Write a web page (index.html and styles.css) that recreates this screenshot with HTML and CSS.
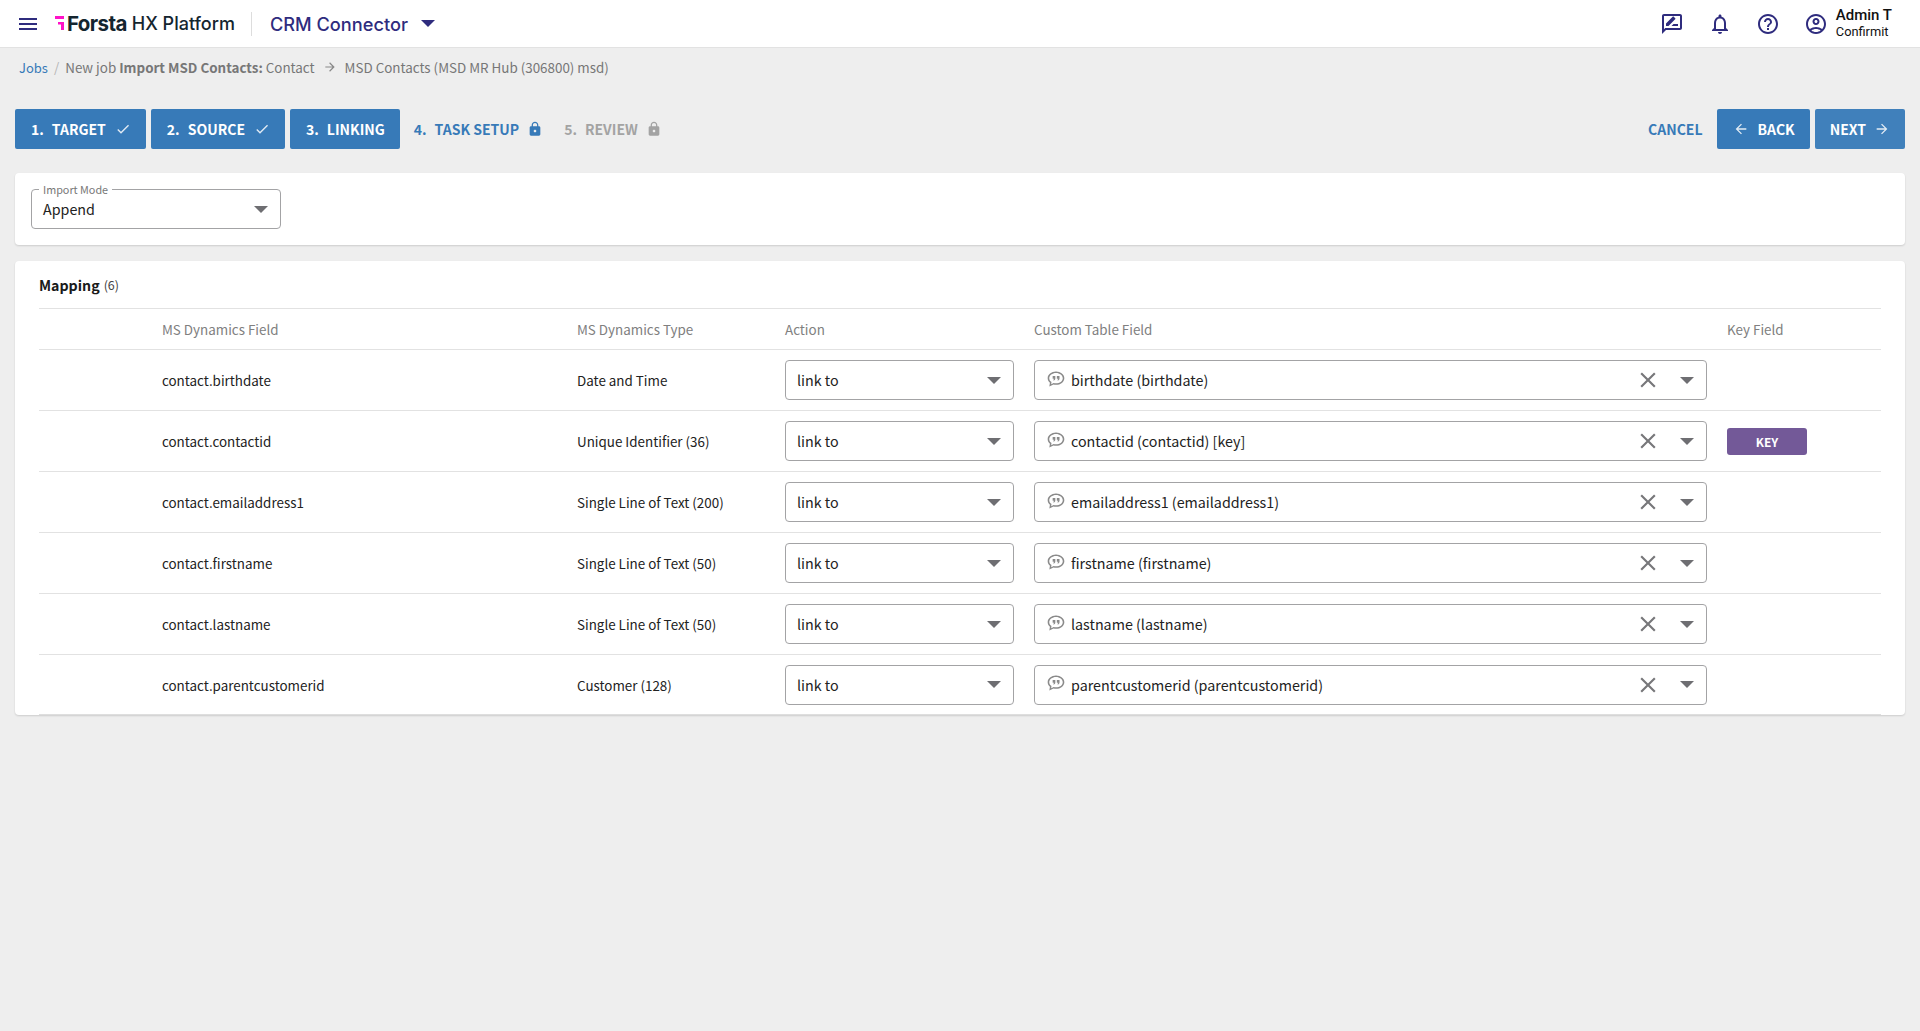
FILE: index.html
```html
<!DOCTYPE html>
<html lang="en">
<head>
    <meta charset="UTF-8">
    <meta name="viewport" content="width=device-width, initial-scale=1.0">
    <title>CRM Connector</title>
    <link rel="stylesheet" href="styles.css">
</head>
<body>
    <svg class="icon-defs" aria-hidden="true">
        <symbol id="i-menu" viewBox="0 0 24 24"><path d="M3 18h18v-2H3v2zm0-5h18v-2H3v2zm0-7v2h18V6H3z"/></symbol>
        <symbol id="i-review" viewBox="0 0 24 24"><path d="M20 2H4c-1.1 0-2 .9-2 2v18l4-4h14c1.1 0 2-.9 2-2V4c0-1.1-.9-2-2-2zm0 14H5.17L4 17.17V4h16v12z"/><path d="M6 14h2.5l6.88-6.88c.2-.2.2-.51 0-.71L13.59 4.62c-.2-.2-.51-.2-.71 0L6 11.5V14z"/><path d="M11.5 14H18v-2h-4.5z"/></symbol>
        <symbol id="i-bell" viewBox="0 0 24 24"><path d="M12 22c1.1 0 2-.9 2-2h-4c0 1.1.9 2 2 2zm6-6v-5c0-3.07-1.63-5.64-4.5-6.32V4c0-.83-.67-1.5-1.5-1.5s-1.5.67-1.5 1.5v.68C7.64 5.36 6 7.92 6 11v5l-2 2v1h16v-1l-2-2zm-2 1H8v-6c0-2.48 1.51-4.5 4-4.5s4 2.02 4 4.5v6z"/></symbol>
        <symbol id="i-help" viewBox="0 0 24 24"><path d="M11 18h2v-2h-2v2zm1-16C6.48 2 2 6.48 2 12s4.48 10 10 10 10-4.48 10-10S17.52 2 12 2zm0 18c-4.41 0-8-3.59-8-8s3.59-8 8-8 8 3.59 8 8-3.59 8-8 8zm0-14c-2.21 0-4 1.79-4 4h2c0-1.1.9-2 2-2s2 .9 2 2c0 2-3 1.75-3 5h2c0-2.25 3-2.5 3-5 0-2.21-1.79-4-4-4z"/></symbol>
        <symbol id="i-account" viewBox="0 0 24 24"><path d="M12 2C6.48 2 2 6.48 2 12s4.48 10 10 10 10-4.48 10-10S17.52 2 12 2zM7.35 18.5C8.66 17.56 10.26 17 12 17s3.34.56 4.65 1.5c-1.31.94-2.91 1.5-4.65 1.5s-3.34-.56-4.65-1.5zm10.79-1.38C16.45 15.8 14.32 15 12 15s-4.45.8-6.14 2.12C4.7 15.73 4 13.95 4 12c0-4.42 3.58-8 8-8s8 3.58 8 8c0 1.95-.7 3.73-1.86 5.12z"/><path d="M12 6c-1.93 0-3.5 1.57-3.5 3.5S10.07 13 12 13s3.5-1.57 3.5-3.5S13.93 6 12 6zm0 5c-.83 0-1.5-.67-1.5-1.5S11.17 8 12 8s1.5.67 1.5 1.5S12.83 11 12 11z"/></symbol>
        <symbol id="i-check" viewBox="0 0 24 24"><path d="M9 16.17L4.83 12l-1.42 1.41L9 19 21 7l-1.41-1.41z"/></symbol>
        <symbol id="i-lock" viewBox="0 0 24 24"><path d="M18 8h-1V6c0-2.76-2.24-5-5-5S7 3.24 7 6v2H6c-1.1 0-2 .9-2 2v10c0 1.1.9 2 2 2h12c1.1 0 2-.9 2-2V10c0-1.1-.9-2-2-2zm-6 9c-1.1 0-2-.9-2-2s.9-2 2-2 2 .9 2 2-.9 2-2 2zm3.1-9H8.9V6c0-1.71 1.39-3.1 3.1-3.1 1.71 0 3.1 1.39 3.1 3.1v2z"/></symbol>
        <symbol id="i-back" viewBox="0 0 24 24"><path d="M20 11H7.83l5.59-5.59L12 4l-8 8 8 8 1.41-1.41L7.83 13H20v-2z"/></symbol>
        <symbol id="i-next" viewBox="0 0 24 24"><path d="M12 4l-1.41 1.41L16.17 11H4v2h12.17l-5.58 5.59L12 20l8-8z"/></symbol>
        <symbol id="i-close" viewBox="0 0 24 24"><path d="M19 6.41L17.59 5 12 10.59 6.41 5 5 6.41 10.59 12 5 17.59 6.41 19 12 13.41 17.59 19 19 17.59 13.41 12z"/></symbol>
        <symbol id="i-quote" viewBox="0 0 24 24"><path d="M12 3C6.5 3 2 6.6 2 11c0 2.1 1 4 2.700 5.400L4 21l5-2.400c1 .3 2 .4 3 .4 5.500 0 10-3.600 10-8s-4.500-8-10-8zm0 14.200c-1 0-1.900-.1-2.800-.4l-3 1.400.4-2.600C4.900 14.500 3.900 12.800 3.900 11c0-3.400 3.600-6.200 8.100-6.200s8.100 2.800 8.100 6.200-3.600 6.200-8.100 6.200z"/><path d="M8 8.500h3.200v3c0 1.300-.8 2.200-2 2.500l-.4-1c.6-.2 1-.6 1-1.200H8zM13 8.500h3.200v3c0 1.300-.8 2.200-2 2.500l-.4-1c.6-.2 1-.6 1-1.200H13z"/></symbol>
    </svg>

    <header class="topbar">
        <svg class="top-icon menu-icon"><use href="#i-menu"/></svg>
        <div class="brand">
            <svg class="brand-mark" viewBox="0 0 9 14"><path d="M0 0h9v3H0zM3 6h6v2.600H3zM6 6h3v8H6z"/></svg>
            <span class="brand-name">Forsta</span>
            <span class="brand-product">HX Platform</span>
        </div>
        <div class="app-switch">
            <span>CRM Connector</span>
            <span class="app-caret"></span>
        </div>
        <div class="top-actions">
            <svg class="top-icon"><use href="#i-review"/></svg>
            <svg class="top-icon"><use href="#i-bell"/></svg>
            <svg class="top-icon"><use href="#i-help"/></svg>
            <svg class="top-icon"><use href="#i-account"/></svg>
            <div class="user">
                <div class="user-name">Admin T</div>
                <div class="user-org">Confirmit</div>
            </div>
        </div>
    </header>

    <div class="breadcrumb">
        <a href="#" class="crumb-link">Jobs</a>
        <span class="crumb-sep">/</span>
        <span>New job <b>Import MSD Contacts:</b> Contact</span>
        <svg class="crumb-arrow"><use href="#i-next"/></svg>
        <span>MSD Contacts (MSD MR Hub (306800) msd)</span>
    </div>

    <div class="toolbar">
        <div class="steps">
            <a href="#" class="btn step-done"><span class="num">1.</span>TARGET<svg class="btn-icon"><use href="#i-check"/></svg></a>
            <a href="#" class="btn step-done"><span class="num">2.</span>SOURCE<svg class="btn-icon"><use href="#i-check"/></svg></a>
            <a href="#" class="btn step-done"><span class="num">3.</span>LINKING</a>
            <span class="step step-current"><span class="num">4.</span>TASK SETUP<svg class="step-lock"><use href="#i-lock"/></svg></span>
            <span class="step step-locked"><span class="num">5.</span>REVIEW<svg class="step-lock"><use href="#i-lock"/></svg></span>
        </div>
        <div class="nav-actions">
            <a href="#" class="cancel">CANCEL</a>
            <a href="#" class="btn btn-back"><svg class="btn-icon"><use href="#i-back"/></svg>BACK</a>
            <a href="#" class="btn btn-next">NEXT<svg class="btn-icon"><use href="#i-next"/></svg></a>
        </div>
    </div>

    <section class="card mode-card">
        <div class="field mode-field">
            <span class="field-legend">Import Mode</span>
            <span class="field-value">Append</span>
            <span class="caret"></span>
        </div>
    </section>

    <section class="card mapping-card">
        <h2 class="mapping-title">Mapping <small>(6)</small></h2>

        <div class="map-row map-head">
            <div>MS Dynamics Field</div>
            <div>MS Dynamics Type</div>
            <div>Action</div>
            <div>Custom Table Field</div>
            <div>Key Field</div>
        </div>

        <div class="map-row">
            <div>contact.birthdate</div>
            <div>Date and Time</div>
            <div class="field"><span class="field-value">link to</span><span class="caret"></span></div>
            <div class="field"><svg class="quote"><use href="#i-quote"/></svg><span class="field-value">birthdate (birthdate)</span><svg class="clear"><use href="#i-close"/></svg><span class="caret"></span></div>
            <div></div>
        </div>
        <div class="map-row">
            <div>contact.contactid</div>
            <div>Unique Identifier (36)</div>
            <div class="field"><span class="field-value">link to</span><span class="caret"></span></div>
            <div class="field"><svg class="quote"><use href="#i-quote"/></svg><span class="field-value">contactid (contactid) [key]</span><svg class="clear"><use href="#i-close"/></svg><span class="caret"></span></div>
            <div><span class="key-badge">KEY</span></div>
        </div>
        <div class="map-row">
            <div>contact.emailaddress1</div>
            <div>Single Line of Text (200)</div>
            <div class="field"><span class="field-value">link to</span><span class="caret"></span></div>
            <div class="field"><svg class="quote"><use href="#i-quote"/></svg><span class="field-value">emailaddress1 (emailaddress1)</span><svg class="clear"><use href="#i-close"/></svg><span class="caret"></span></div>
            <div></div>
        </div>
        <div class="map-row">
            <div>contact.firstname</div>
            <div>Single Line of Text (50)</div>
            <div class="field"><span class="field-value">link to</span><span class="caret"></span></div>
            <div class="field"><svg class="quote"><use href="#i-quote"/></svg><span class="field-value">firstname (firstname)</span><svg class="clear"><use href="#i-close"/></svg><span class="caret"></span></div>
            <div></div>
        </div>
        <div class="map-row">
            <div>contact.lastname</div>
            <div>Single Line of Text (50)</div>
            <div class="field"><span class="field-value">link to</span><span class="caret"></span></div>
            <div class="field"><svg class="quote"><use href="#i-quote"/></svg><span class="field-value">lastname (lastname)</span><svg class="clear"><use href="#i-close"/></svg><span class="caret"></span></div>
            <div></div>
        </div>
        <div class="map-row">
            <div>contact.parentcustomerid</div>
            <div>Customer (128)</div>
            <div class="field"><span class="field-value">link to</span><span class="caret"></span></div>
            <div class="field"><svg class="quote"><use href="#i-quote"/></svg><span class="field-value">parentcustomerid (parentcustomerid)</span><svg class="clear"><use href="#i-close"/></svg><span class="caret"></span></div>
            <div></div>
        </div>
    </section>
</body>
</html>
```

FILE: styles.css
```css
* {
    margin: 0;
    padding: 0;
    box-sizing: border-box;
}

body {
    background-color: #eeeeee;
    min-height: 100vh;
    color: #1a1a1a;
    font-family: "Noto Sans CJK SC", "Open Sans", sans-serif;
    font-size: 13.4px;
}

a {
    text-decoration: none;
}

.icon-defs {
    display: none;
}

/* top bar */
.topbar {
    height: 48px;
    background: white;
    border-bottom: 1px solid #e2e2e2;
    display: flex;
    align-items: center;
    padding-left: 16px;
    font-family: Inter, Roboto, sans-serif;
}

.top-icon {
    width: 24px;
    height: 24px;
    fill: #2f2c7e;
}

.menu-icon {
    margin-right: 15px;
}

.brand {
    display: flex;
    align-items: center;
    height: 24px;
    padding-right: 16px;
    border-right: 1px solid #dddddd;
}

.brand-mark {
    width: 9px;
    height: 14px;
    fill: #ff12c8;
    margin-right: 3px;
    margin-bottom: 2px;
}

.brand-name {
    font-size: 20.5px;
    font-weight: 700;
    color: #14252f;
    letter-spacing: -0.6px;
    margin-right: 5px;
}

.brand-product {
    font-size: 18px;
    font-weight: 500;
    color: #14252f;
}

.app-switch {
    display: flex;
    align-items: center;
    gap: 13px;
    margin-left: 18px;
    font-size: 18.2px;
    font-weight: 500;
    color: #2f2c7e;
}

.app-caret {
    border-left: 7px solid transparent;
    border-right: 7px solid transparent;
    border-top: 7px solid #2f2c7e;
}

.top-actions {
    margin-left: auto;
    display: flex;
    align-items: center;
    gap: 24px;
    padding-right: 28px;
}

.user {
    margin-left: -16px;
    font-family: Roboto, sans-serif;
    color: #111111;
}

.user-name {
    font-size: 15px;
    font-weight: 500;
    line-height: 16px;
}

.user-org {
    font-size: 12.8px;
    line-height: 17px;
}

/* breadcrumb */
.breadcrumb {
    display: flex;
    align-items: center;
    height: 38px;
    padding-left: 19px;
    color: #777777;
    font-size: 13.4px;
}

.crumb-link {
    color: #377ab8;
    font-size: 13px;
}

.crumb-sep {
    margin: 0 6px;
    color: #b5b5b5;
}

.crumb-arrow {
    width: 14px;
    height: 14px;
    fill: #888888;
    margin: 0 8px;
}

/* stepper */
.toolbar {
    display: flex;
    justify-content: space-between;
    margin-top: 23px;
    padding: 0 15px;
    height: 40px;
}

.steps,
.nav-actions {
    display: flex;
    align-items: center;
    gap: 5px;
}

.btn {
    display: flex;
    align-items: center;
    height: 40px;
    padding: 0 15px 0 16px;
    background: #377ab8;
    border-radius: 2px;
    color: white;
    font-size: 14px;
    font-weight: 700;
}

.num {
    margin-right: 8px;
}

.btn-icon {
    width: 16px;
    height: 16px;
    fill: white;
    opacity: 0.85;
}

.step-done .btn-icon {
    margin-left: 9px;
}

.step {
    display: flex;
    align-items: center;
    margin-left: 9px;
    font-size: 14px;
    font-weight: 700;
}

.step-current {
    color: #377ab8;
    fill: #377ab8;
}

.step-locked {
    margin-left: 16px;
    color: #a3a3a3;
    fill: #a3a3a3;
}

.step-lock {
    width: 16px;
    height: 16px;
    margin-left: 8px;
}

.cancel {
    margin-right: 9px;
    color: #377ab8;
    font-size: 14px;
    font-weight: 700;
}

.btn-back .btn-icon {
    margin-right: 9px;
}

.btn-next {
    padding-left: 15px;
    background: #4080bb;
}

.btn-next .btn-icon {
    margin-left: 8px;
}

/* cards */
.card {
    margin: 0 15px;
    background: white;
    border-radius: 4px;
    box-shadow: 0 1px 2px rgba(0, 0, 0, 0.14);
}

.mode-card {
    margin-top: 24px;
    padding: 16px;
    height: 72px;
}

.mapping-card {
    margin-top: 16px;
    padding: 0 24px;
}

.mapping-title {
    display: flex;
    align-items: center;
    gap: 4px;
    height: 47px;
    font-size: 14.2px;
    font-weight: 700;
    color: #1a1a1a;
}

.mapping-title small {
    font-size: 12.5px;
    font-weight: 400;
    color: #444444;
}

/* form fields */
.field {
    position: relative;
    display: flex;
    align-items: center;
    height: 40px;
    padding: 0 12px 0 11px;
    background: white;
    border: 1px solid #a3a3a5;
    border-radius: 4px;
}

.field-value {
    flex: 1;
    padding-bottom: 1px;
    color: #222222;
    font-size: 14.3px;
}

.caret {
    border-left: 7px solid transparent;
    border-right: 7px solid transparent;
    border-top: 7px solid #6e6e72;
}

.mode-field {
    width: 250px;
}

.mode-field .field-value {
    padding-bottom: 1px;
}

.field-legend {
    position: absolute;
    left: 7px;
    top: -7px;
    padding: 0 4px;
    background: white;
    color: #777777;
    font-size: 10.8px;
    line-height: 12px;
}

.quote {
    width: 20px;
    height: 20px;
    fill: #8a8a8a;
    margin-right: 5px;
    margin-bottom: 3px;
}

.clear {
    width: 26px;
    height: 26px;
    fill: #77777a;
    margin-right: 19px;
}

/* mapping grid */
.map-row {
    display: grid;
    grid-template-columns: 123px 415px 208px 229px 693px 1fr;
    align-items: center;
    height: 61px;
    border-top: 1px solid #e2e2e2;
    color: #222222;
}

.map-row > :first-child {
    grid-column: 2;
}

.map-row > .field:nth-child(4) {
    margin-left: 20px;
}

.map-head {
    height: 41px;
    color: #808080;
}

.map-head > :nth-child(4) {
    margin-left: 20px;
}

.map-row:last-child {
    border-bottom: 1px solid #dedede;
}

.map-row > :last-child {
    padding-left: 20px;
}

.key-badge {
    display: flex;
    align-items: center;
    justify-content: center;
    width: 80px;
    height: 27px;
    background: #735998;
    border-radius: 3px;
    color: white;
    font-size: 12px;
    font-weight: 700;
}
```
